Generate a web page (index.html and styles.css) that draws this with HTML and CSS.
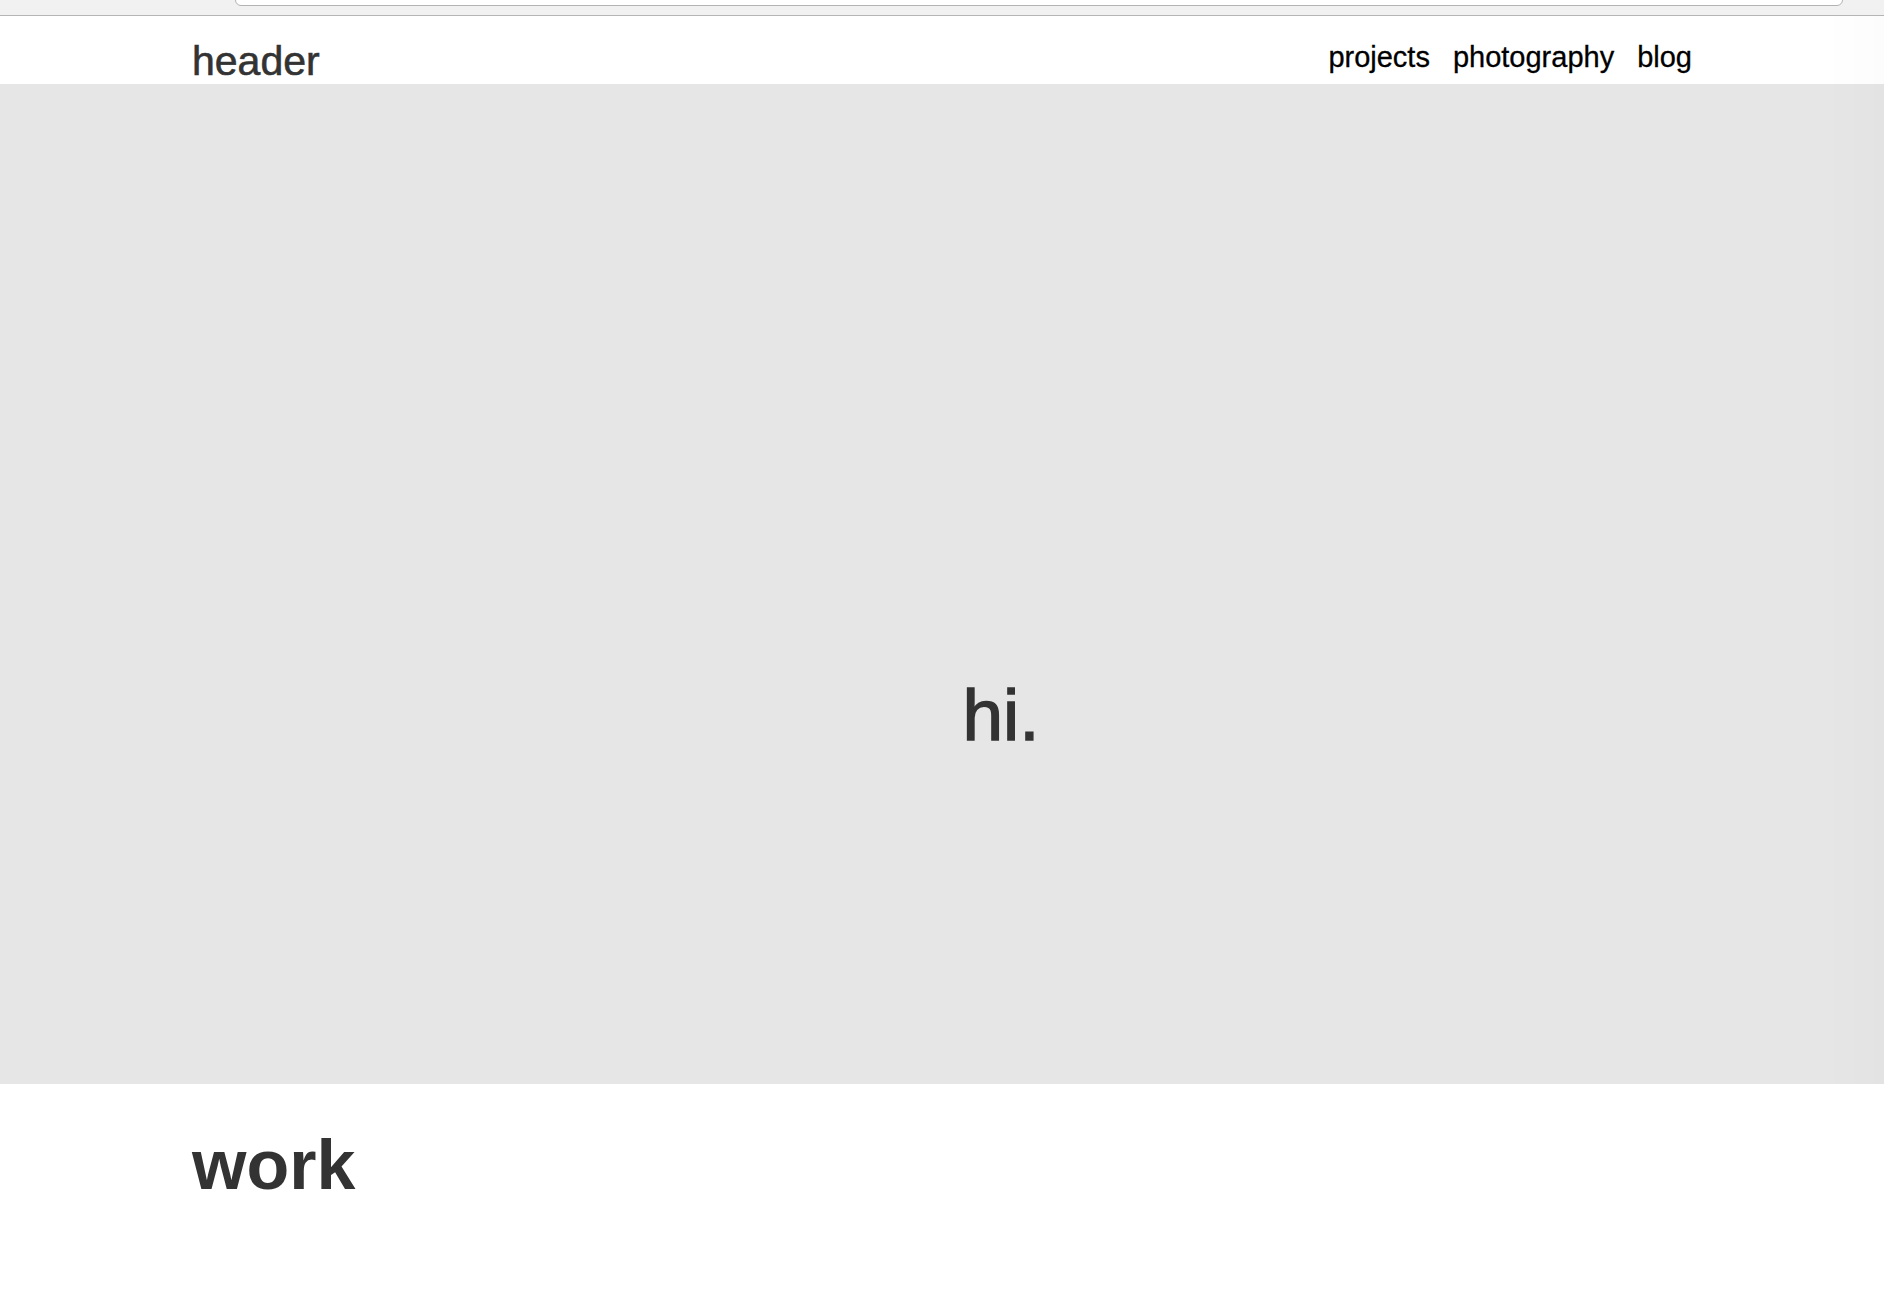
FILE: index.html
```html
<!DOCTYPE html>
<html lang="en">
<head>
<meta charset="utf-8">
<title>header</title>
<link rel="stylesheet" href="styles.css">
</head>
<body>
<div class="chrome"><div class="addressbar"></div></div>
<header class="site-header">
  <div class="container header-row">
    <div class="logo">header</div>
    <nav class="nav">
      <a href="#">projects</a>
      <a href="#">photography</a>
      <a href="#">blog</a>
    </nav>
  </div>
</header>
<section class="hero">
  <div class="hero-text">hi.</div>
</section>
<section class="work">
  <div class="container">
    <h2 class="work-title">work</h2>
  </div>
</section>
<div class="edge-shade"></div>
</body>
</html>
```
FILE: styles.css
```css
html, body {
  margin: 0;
  padding: 0;
  background: #ffffff;
}
body {
  font-family: "Liberation Sans", Arial, Helvetica, sans-serif;
  color: #333333;
  height: 1292px;
  overflow: hidden;
}
.chrome {
  height: 15px;
  background: #f1f1f1;
  border-bottom: 1px solid #b5b5b5;
  overflow: hidden;
}
.addressbar {
  margin-left: 235px;
  width: 1606px;
  height: 14px;
  margin-top: -10px;
  background: #ffffff;
  border: 1px solid #b3b3b3;
  border-radius: 0 0 6px 6px;
}
.container {
  max-width: 1500px;
  margin: 0 auto;
}
.site-header {
  height: 68px;
  background: #ffffff;
}
.header-row {
  display: flex;
  justify-content: space-between;
  align-items: flex-start;
  padding-top: 25px;
}
.logo {
  font-size: 41px;
  line-height: 40px;
  color: #333333;
  -webkit-text-stroke: 0.6px #333333;
}
.nav {
  display: flex;
  gap: 23px;
  margin-top: 2px;
}
.nav a {
  font-size: 29px;
  line-height: 28px;
  color: #000000;
  text-decoration: none;
  -webkit-text-stroke: 0.3px #000000;
}
.hero {
  height: 1000px;
  background: #e6e6e6;
  box-sizing: border-box;
  padding-top: 595px;
  padding-left: 118px;
  text-align: center;
}
.hero-text {
  font-size: 73px;
  line-height: 72px;
  color: #333333;
  -webkit-text-stroke: 1.4px #333333;
}
.work-title {
  margin: 45px 0 0 0;
  font-size: 70px;
  line-height: 72px;
  font-weight: bold;
  color: #333333;
}
.edge-shade {
  position: fixed;
  top: 16px;
  right: 0;
  width: 60px;
  height: 1068px;
  background: linear-gradient(to right, rgba(0,0,0,0), rgba(0,0,0,0.012));
  pointer-events: none;
}
```
